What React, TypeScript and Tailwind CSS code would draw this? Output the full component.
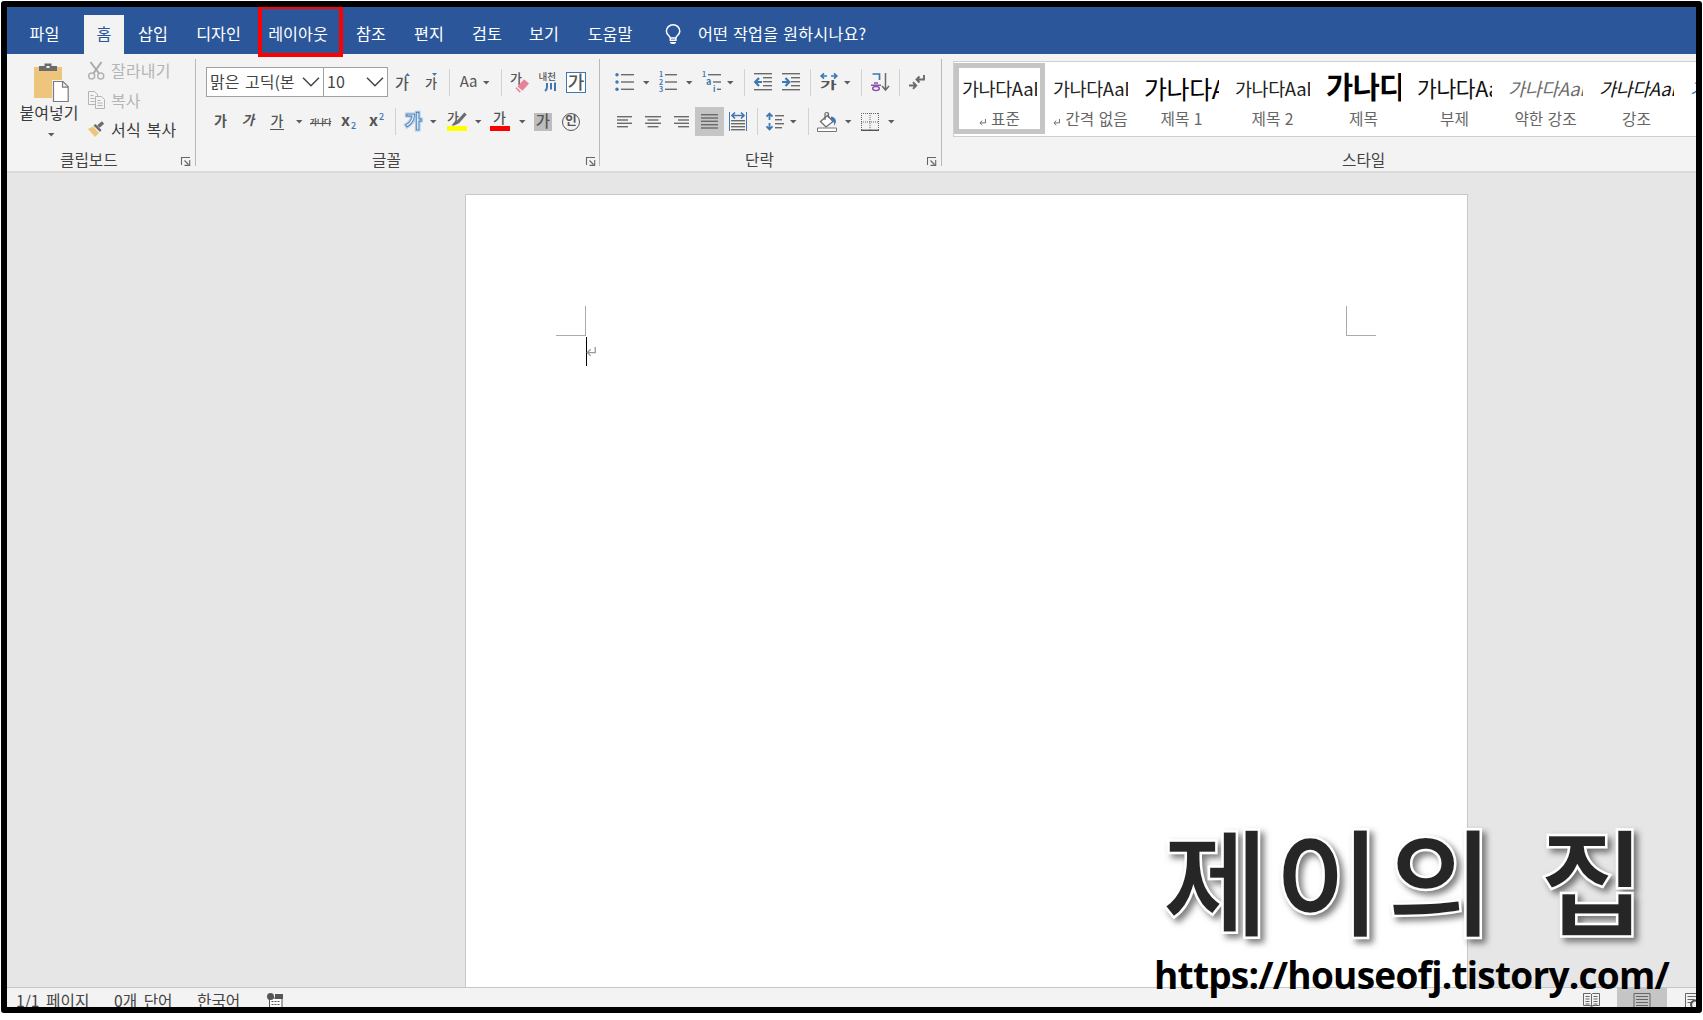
import type { ReactNode } from 'react'
import clsx from 'clsx'

interface Tab {
  label: string
  className: string
}

interface StyleItem {
  name: string
  preview: string
  previewClass: string
  paragraph?: boolean
  selected?: boolean
}

const GRAY = '#6a6a6a'
const BLUE = '#3e78b3'

const tabs: Tab[] = [
  { label: '삽입', className: 'ml-[14px] w-[30px]' },
  { label: '디자인', className: 'ml-[28px] w-[45px]' },
  { label: '레이아웃', className: 'ml-[27px] w-[60px]' },
  { label: '참조', className: 'ml-[28px] w-[30px]' },
  { label: '편지', className: 'ml-[28px] w-[30px]' },
  { label: '검토', className: 'ml-[28px] w-[30px]' },
  { label: '보기', className: 'ml-[27px] w-[30px]' },
  { label: '도움말', className: 'ml-[28px] w-[46px]' },
]

const styleItems: StyleItem[] = [
  { name: '표준', preview: '가나다AaBb', previewClass: 'text-[18.5px] text-[#222]', paragraph: true, selected: true },
  { name: '간격 없음', preview: '가나다AaBb', previewClass: 'text-[18.5px] text-[#222]', paragraph: true },
  { name: '제목 1', preview: '가나다AaBb', previewClass: 'text-[25px] text-black' },
  { name: '제목 2', preview: '가나다AaBb', previewClass: 'text-[18.5px] text-[#222]' },
  { name: '제목', preview: '가나다', previewClass: 'pb-[4px] text-[29.5px] font-bold text-black' },
  { name: '부제', preview: '가나다AaBb', previewClass: 'text-[21.5px] text-[#111]' },
  { name: '약한 강조', preview: '가나다AaBb', previewClass: 'text-[18.5px] italic text-[#6c6c6c]' },
  { name: '강조', preview: '가나다AaBb', previewClass: 'text-[18.5px] italic text-[#111]' },
  { name: '강한 강조', preview: '가나다AaBb', previewClass: 'text-[18.5px] italic text-[#4472c4]' },
]

function Icon({ w, h, className, children }: { w: number; h: number; className?: string; children: ReactNode }) {
  return (
    <svg width={w} height={h} viewBox={`0 0 ${w} ${h}`} fill="none" className={clsx('block shrink-0 overflow-visible', className)}>
      {children}
    </svg>
  )
}

function Caret({ className }: { className?: string }) {
  return (
    <Icon w={6} h={3} className={className}>
      <path d="M0 0h6.500L3.250 3.600z" fill="#5c5c5c" />
    </Icon>
  )
}

function Sep({ className }: { className?: string }) {
  return <div className={clsx('h-[27px] w-px shrink-0 bg-[#d2d2d2]', className)} />
}

function Glyph({ className, children }: { className?: string; children: ReactNode }) {
  return (
    <span className={clsx('flex shrink-0 items-center justify-center leading-none whitespace-nowrap text-[#555]', className)}>
      {children}
    </span>
  )
}

// Horizontal strokes given as [x1, x2, y]
function Lines({ rows, color = GRAY }: { rows: number[][]; color?: string }) {
  return (
    <>
      {rows.map(([x1, x2, y]) => (
        <rect key={`${x1}-${y}`} x={x1} y={y} width={x2 - x1} height={1.4} fill={color} />
      ))}
    </>
  )
}

function Launcher() {
  return (
    <Icon w={10} h={9}>
      <path d="M.5 8V.5H9M3.500 3.500l4 4M8.700 3v5.400H3.500" stroke="#666" strokeWidth="1.100" />
    </Icon>
  )
}

function Group({
  label,
  className,
  labelClass,
  launcherClass,
  children,
}: {
  label: string
  className: string
  labelClass: string
  launcherClass?: string
  children: ReactNode
}) {
  return (
    <section className={clsx('flex h-full shrink-0', className)}>
      <div className="flex min-w-0 flex-1 flex-col">
        <div className="h-[96px]">{children}</div>
        <div className="flex h-[21px] items-center">
          <span className={clsx('shrink-0 pb-[2px] text-[15.700px] leading-none whitespace-nowrap text-[#444]', labelClass)}>{label}</span>
          {launcherClass && (
            <span className={clsx('mt-[2px]', launcherClass)}>
              <Launcher />
            </span>
          )}
        </div>
      </div>
      {launcherClass && <div className="mt-[5px] h-[107px] w-px bg-[#b9b9b9]" />}
    </section>
  )
}

function TabBar() {
  return (
    <nav className="flex h-[47px] shrink-0 items-end bg-[#2b579a] text-[16.2px] text-white">
      <span className="ml-[22px] flex h-[39px] w-[31px] items-center justify-center pb-[2px] whitespace-nowrap">파일</span>
      <span className="ml-[24px] flex h-[39px] w-[40px] items-center justify-center bg-[#f3f3f3] pb-[2px] text-[#2b579a]">홈</span>
      {tabs.map(tab => (
        <span
          key={tab.label}
          className={clsx('relative flex h-[39px] shrink-0 items-center justify-center pb-[2px] whitespace-nowrap', tab.className)}
        >
          {tab.label}
          {tab.label === '레이아웃' && (
            <span className="absolute -top-[10px] -left-[10px] h-[52px] w-[85px] border-4 border-[#fe0000]" />
          )}
        </span>
      ))}
      <span className="ml-[32px] flex h-[39px] items-center">
        <Icon w={17} h={21}>
          <path
            d="M5.300 16.300v-2.600C4.500 11.500 1.400 10.500 1.400 7.200a6.700 6.500 0 0 1 13.400 0c0 3.300-3 4.300-3.900 6.500v2.600zM5.500 14h5.200"
            stroke="#fff"
            strokeWidth="1.500"
          />
          <path d="M5 18h6v1.200H9.800V20H6.300v-.8H5z" fill="#fff" />
        </Icon>
      </span>
      <span className="ml-[16px] flex h-[39px] items-center pb-[2px] tracking-[0.2px] whitespace-nowrap [word-spacing:1px]">
        어떤 작업을 원하시나요?
      </span>
    </nav>
  )
}

function ClipboardGroup() {
  return (
    <Group label="클립보드" className="w-[189px]" labelClass="ml-[53px] w-[60px]" launcherClass="ml-[61px]">
      <div className="flex text-[16px] leading-none text-[#3b3b3b]">
        <div className="flex w-[74px] flex-col items-center pl-[10px]">
          <Icon w={35} h={39} className="mt-[9px] ml-[4px]">
            <path d="M0 4h28v31H0z" fill="#edc57d" />
            <path d="M5 8V3h5.500V.5h7V3H23v5z" fill="#6b6b6b" />
            <path d="M12.500 3h3v2h-3z" fill="#f3f3f3" />
            <path d="M18 17h13l5 6v17H18z" fill="#f3f3f3" />
            <path d="M19.500 18.500h9.500l5.200 5.200v14.800H19.500zM28.500 18.700v5.500h5.500" fill="#fff" stroke="#7b7b7b" strokeWidth="1.200" />
          </Icon>
          <span className="mt-[2px] whitespace-nowrap">붙여넣기</span>
          <Caret className="mt-[13px] ml-[4px]" />
        </div>
        <div className="ml-[7px] flex flex-col pt-[4px]">
          <div className="flex h-[29px] items-center gap-[6px] text-[#b4b4b4]">
            <Icon w={17} h={18} className="-mt-[4px]">
              <path d="M2.500 0L11.500 12M13.500 0L5 12" stroke="#a9a9a9" strokeWidth="2" />
              <circle cx="3.700" cy="14" r="3" stroke="#b4b4b4" strokeWidth="1.500" />
              <circle cx="12.700" cy="14" r="3" stroke="#b4b4b4" strokeWidth="1.500" />
            </Icon>
            <span className="pb-[5px] tracking-[0.2px]">잘라내기</span>
          </div>
          <div className="flex h-[29px] items-center gap-[6px] text-[#b4b4b4]">
            <Icon w={17} h={19} className="-mt-[2px]">
              <path d="M.5.5h6l3 3v10h-9zM2.500 4.500h3M2.500 7.500h4M2.500 10.500h4" stroke="#b4b4b4" />
              <path d="M7.500 5.500h6l3 3v9h-9z" fill="#f3f3f3" stroke="#b4b4b4" />
              <path d="M9.500 9.500h3M9.500 12h5M9.500 14.500h5" stroke="#b4b4b4" />
            </Icon>
            <span className="pb-[4px]">복사</span>
          </div>
          <div className="flex h-[29px] items-center gap-[6px] whitespace-nowrap">
            <Icon w={17} h={16} className="-mt-[3px]">
              <path d="M0 8l5-2.500 6 6.500-4 4z" fill="#edc57d" />
              <path d="M5.500 4.500l2-1.500 6 6-1.500 2z" fill="#6b6b6b" />
              <path d="M10.500 5.500L15 1.500" stroke="#6b6b6b" strokeWidth="3.500" />
            </Icon>
            <span className="pb-[4px] tracking-[0.2px] [word-spacing:2px]">서식 복사</span>
          </div>
        </div>
      </div>
    </Group>
  )
}

function Combo({ value, className }: { value: string; className: string }) {
  return (
    <div className={clsx('flex h-[30px] shrink-0 items-center justify-between border border-[#a0a0a0] bg-white pr-[4px] pl-[3px]', className)}>
      <span className="pb-[3px] text-[16px] leading-none whitespace-nowrap text-[#444] [word-spacing:2px]">{value}</span>
      <Icon w={16} h={10}>
        <path d="M0 .7l8 8 8-8" stroke="#444" strokeWidth="1.500" />
      </Icon>
    </div>
  )
}

function FontGroup() {
  return (
    <Group label="글꼴" className="w-[404px]" labelClass="ml-[176px] w-[30px]" launcherClass="ml-[184px]">
      <div className="box-content flex h-[30px] items-center pt-[13px]">
        <Combo value="맑은 고딕(본" className="ml-[10px] w-[118px]" />
        <Combo value="10" className="-ml-px w-[65px]" />
        <Glyph className="relative ml-[7px] w-[14px] text-[15px] font-medium">
          가
          <Icon w={5} h={3} className="absolute top-[-2px] right-[-1px]">
            <path d="M0 3h5L2.500 0z" fill={BLUE} />
          </Icon>
        </Glyph>
        <Glyph className="relative ml-[16px] w-[12px] text-[13px] font-medium">
          가
          <Icon w={5} h={3} className="absolute top-[-3px] right-0">
            <path d="M0 0h5L2.500 3z" fill={BLUE} />
          </Icon>
        </Glyph>
        <Sep className="ml-[12px]" />
        <Glyph className="ml-[9px] w-[19px] pb-[3px] text-[15px] tracking-[-0.3px]">Aa</Glyph>
        <Caret className="ml-[5px]" />
        <Sep className="ml-[12px]" />
        <Icon w={18} h={20} className="ml-[9px]">
          <text x="-1" y="11" fontSize="13" fontWeight="500" fill="#555">가</text>
          <path d="M6.500 14.500l6.500-7.200 5 4.200-6.500 7.200z" fill="#e8829a" />
          <path d="M4.500 16.200l1-1 4.300 4.300-1 1.200z" fill="#e8829a" />
        </Icon>
        <Icon w={18} h={20} className="ml-[10px]">
          <text x="-.5" y="7.500" fontSize="9.500" fontWeight="500" fill="#555">내천</text>
          <path d="M8 11v4q0 2.500-2 4M12 11v6.500M16 10.500v8.500" stroke={BLUE} strokeWidth="2" />
        </Icon>
        <Glyph className="ml-[9px] h-[21px] w-[20px] border border-[#3e78b3] bg-white pb-[3px] text-[18px] font-medium">가</Glyph>
      </div>
      <div className="mt-[10px] flex h-[29px] items-center">
        <Glyph className="ml-[18px] w-[13px] pb-[3px] text-[14px] font-bold">가</Glyph>
        <Glyph className="ml-[15px] w-[12px] pb-[3px] text-[13.500px] font-bold italic">가</Glyph>
        <Glyph className="ml-[16px] h-[17px] w-[14px] border-b border-[#555] pb-[2px] text-[14px] font-medium">가</Glyph>
        <Caret className="ml-[12px]" />
        <Glyph className="relative ml-[8px] w-[21px] text-[8px] font-bold tracking-[-0.2px]">
          가나다
          <span className="absolute inset-x-0 top-[5px] h-px bg-[#555]" />
        </Glyph>
        <Icon w={16} h={18} className="ml-[10px]">
          <text x="0" y="13" fontSize="16" fontWeight="700" fill="#555">x</text>
          <text x="10" y="16" fontSize="9" fontWeight="500" fill={BLUE}>2</text>
        </Icon>
        <Icon w={16} h={18} className="ml-[12px]">
          <text x="0" y="13" fontSize="16" fontWeight="700" fill="#555">x</text>
          <text x="10" y="6.500" fontSize="9" fontWeight="500" fill={BLUE}>2</text>
        </Icon>
        <Sep className="ml-[10px]" />
        <Icon w={18} h={20} className="ml-[9px]">
          <text x="0" y="15.500" fontSize="18" fontWeight="700" fill="#f7fbff" stroke="#b5cfea" strokeWidth="3.200" paintOrder="stroke">가</text>
          <text x="0" y="15.500" fontSize="18" fontWeight="700" fill="#f7fbff" stroke={BLUE} strokeWidth=".9">가</text>
        </Icon>
        <Caret className="ml-[7px]" />
        <Icon w={20} h={21} className="ml-[11px]">
          <text x="0" y="11" fontSize="13" fontWeight="500" fill="#555">가</text>
          <path d="M18.500 2.500L11 11" stroke="#6b6b6b" strokeWidth="3.200" />
          <path d="M9 9l3.500 3-5.500 2.500H4.500z" fill="#6b6b6b" />
          <rect y="15" width="20" height="5" fill="#ff0" />
        </Icon>
        <Caret className="ml-[8px]" />
        <Icon w={20} h={21} className="ml-[9px]">
          <text x="3" y="12" fontSize="14" fontWeight="500" fill="#555">가</text>
          <rect y="15" width="20" height="5" fill="#f00" />
        </Icon>
        <Caret className="ml-[9px]" />
        <Glyph className="ml-[9px] h-[18px] w-[18px] bg-[#bdbdbd] pb-[2px] text-[15.500px] font-medium">가</Glyph>
        <Glyph className="ml-[10px] h-[18px] w-[18px] rounded-full border border-[#555] pb-[2px] text-[12.500px] font-bold">인</Glyph>
      </div>
    </Group>
  )
}

function ParagraphGroup() {
  const indentLines = [[0, 18, 0], [9, 18, 4], [9, 18, 8], [9, 18, 12], [0, 18, 16]]

  return (
    <Group label="단락" className="w-[342px]" labelClass="ml-[145px] w-[30px]" launcherClass="ml-[152px]">
      <div className="box-content flex h-[30px] items-center pt-[13px]">
        <Icon w={19} h={18} className="ml-[15px]">
          {[1.7, 9, 16.3].map(y => (
            <circle key={y} cx="2" cy={y} r="1.700" fill={BLUE} />
          ))}
          <Lines rows={[[6, 19, 1], [6, 19, 8.3], [6, 19, 15.6]]} />
        </Icon>
        <Caret className="ml-[9px]" />
        <Icon w={18} h={18} className="ml-[10px]">
          <text x="0" y="4" fontSize="7" fontWeight="700" fill={BLUE}>1</text>
          <text x="0" y="11.500" fontSize="7" fontWeight="700" fill={BLUE}>2</text>
          <text x="0" y="19" fontSize="7" fontWeight="700" fill={BLUE}>3</text>
          <Lines rows={[[6, 18, 1], [6, 18, 8.3], [6, 18, 15.6]]} />
        </Icon>
        <Caret className="ml-[9px]" />
        <Icon w={19} h={18} className="ml-[10px]">
          <text x="0" y="4" fontSize="7" fontWeight="700" fill={BLUE}>1</text>
          <text x="4" y="11.500" fontSize="9" fontWeight="700" fill={BLUE}>a</text>
          <text x="11" y="19" fontSize="8" fontWeight="700" fill={BLUE}>i</text>
          <Lines rows={[[6, 19, 1], [11, 19, 8.3], [15, 19, 15.6]]} />
        </Icon>
        <Caret className="ml-[6px]" />
        <Sep className="ml-[11px]" />
        <Icon w={18} h={18} className="ml-[9px]">
          <Lines rows={indentLines} />
          <path d="M8 9H2M5 5L1.200 9 5 13" stroke={BLUE} strokeWidth="2.200" />
        </Icon>
        <Icon w={19} h={18} className="ml-[10px]">
          <Lines rows={indentLines} />
          <path d="M0 9h6M3.500 5l3.800 4-3.800 4" stroke={BLUE} strokeWidth="2.200" />
        </Icon>
        <Sep className="ml-[9px]" />
        <Icon w={18} h={18} className="ml-[9px]">
          <path d="M1 3h6M4 .3L1.200 3 4 5.700M11 3h6M14 .3l2.800 2.700L14 5.700" stroke={BLUE} strokeWidth="1.700" />
          <text x="0" y="17" fontSize="14" fontWeight="700" fill="#555" transform="matrix(1.300 0 0 .75 0 3.500)">가</text>
        </Icon>
        <Caret className="ml-[6px]" />
        <Sep className="ml-[11px]" />
        <Icon w={19} h={18} className="ml-[9px]">
          <path d="M1.500 1h7v6" stroke={BLUE} strokeWidth="1.700" />
          <path d="M3 10h4M0 12.300h10" stroke="#8a52ae" strokeWidth="1.500" />
          <ellipse cx="5" cy="15.600" rx="3.300" ry="2" stroke="#8a52ae" strokeWidth="1.500" />
          <path d="M14.500 0v17M11 13l3.500 4 3.500-4" stroke={GRAY} strokeWidth="1.500" />
        </Icon>
        <Sep className="ml-[9px]" />
        <Icon w={18} h={18} className="ml-[8px]">
          <path d="M16 2v4.500H9M11.500 3.500L8.500 6.500l3 3" stroke={GRAY} strokeWidth="1.900" />
          <path d="M1 12.500h7M5 9.200l3.200 3.300L5 15.800" stroke={GRAY} strokeWidth="1.900" />
        </Icon>
      </div>
      <div className="mt-[10px] flex h-[29px] items-center">
        <Icon w={15} h={12} className="ml-[17px]">
          <Lines rows={[[0, 15, 0], [0, 11, 3.3], [0, 15, 6.6], [0, 11, 10]]} />
        </Icon>
        <Icon w={16} h={12} className="ml-[13px]">
          <Lines rows={[[0, 16, 0], [2.5, 13.5, 3.3], [0, 16, 6.6], [2.5, 13.5, 10]]} />
        </Icon>
        <Icon w={15} h={12} className="ml-[13px]">
          <Lines rows={[[0, 15, 0], [4, 15, 3.3], [0, 15, 6.6], [4, 15, 10]]} />
        </Icon>
        <span className="ml-[6px] flex h-[29px] w-[29px] items-center justify-center bg-[#c5c5c5]">
          <Icon w={17} h={15} className="-mt-px">
            <Lines rows={[[0, 17, 0], [0, 17, 3.3], [0, 17, 6.6], [0, 17, 10], [0, 17, 13.3]]} />
          </Icon>
        </span>
        <Icon w={18} h={19} className="ml-[5px]">
          <path d="M.5 0v19M17.500 0v19" stroke={BLUE} />
          <path d="M4 3.500h10M6 .5L3 3.500l3 3M12 .5l3 3-3 3" stroke={BLUE} strokeWidth="1.700" />
          <Lines rows={[[2, 16, 8], [2, 16, 11], [2, 16, 14], [2, 16, 17]]} />
        </Icon>
        <Sep className="ml-[10px]" />
        <Icon w={18} h={19} className="ml-[8px]">
          <path d="M3.500 2v6M.5 4.700L3.500 1.500l3 3.200M3.500 11v6M.5 14.300l3 3.200 3-3.200" stroke={BLUE} strokeWidth="1.800" />
          <Lines rows={[[9, 18, 3], [9, 16, 7], [9, 18, 11], [9, 16, 15]]} />
        </Icon>
        <Caret className="ml-[6px]" />
        <Sep className="ml-[12px]" />
        <Icon w={20} h={20} className="ml-[8px]">
          <path d="M3.500 9.500l7-6 5.500 6-7 5.500z" fill="#fff" stroke={GRAY} strokeWidth="1.300" />
          <path d="M8 8V2.500Q8 .5 9.800.5t1.700 2V6" stroke={GRAY} strokeWidth="1.200" />
          <path d="M14 4.500q4.500.5 5 5l-1.500 4.500q-.5-5.500-3.500-6z" fill={BLUE} />
          <path d="M.5 16h19v3.500H.5z" fill="#fff" stroke="#777" />
        </Icon>
        <Caret className="ml-[8px]" />
        <Icon w={18} h={18} className="ml-[10px]">
          <path d="M0 .5h18M0 9h18M.5 0v17M9 0v17M17.500 0v17" stroke="#666" strokeDasharray="1 1" />
          <path d="M0 17.300h18" stroke="#555" strokeWidth="1.400" />
        </Icon>
        <Caret className="ml-[9px]" />
      </div>
    </Group>
  )
}

function ParagraphMark({ size, color, className }: { size: number; color: string; className?: string }) {
  return (
    <svg width={size} height={size} viewBox="0 0 9 9" fill="none" className={clsx('block shrink-0', className)}>
      <path d="M8.300 0v5H1.500M4.200 2L1.200 5l3 3" stroke={color} strokeWidth="1.200" />
    </svg>
  )
}

function StylesGroup() {
  return (
    <Group label="스타일" className="min-w-0 flex-1" labelClass="ml-[400px]">
      <div className="flex h-full pt-[7px] pb-[13px] pl-[11px]">
        <div className="flex min-w-0 flex-1 overflow-hidden border-y border-l border-[#cfcfcf] bg-white pt-px">
          {styleItems.map(item => (
            <div
              key={item.name}
              className={clsx(
                'flex h-[71px] w-[91px] shrink-0 flex-col border-[5px] px-[3px]',
                item.selected ? 'border-[#c5c5c5]' : 'border-transparent',
              )}
            >
              <div
                className={clsx(
                  'flex h-[40px] w-[75px] items-center overflow-hidden leading-none tracking-[-0.4px] whitespace-nowrap',
                  item.previewClass,
                )}
              >
                {item.preview}
              </div>
              <div className="mt-[2px] flex h-[18px] items-center justify-center gap-[5px] text-[15.700px] leading-none whitespace-nowrap text-[#666] [word-spacing:1px]">
                {item.paragraph && <ParagraphMark size={7} color="#666" className="mt-[6px]" />}
                {item.name}
              </div>
            </div>
          ))}
        </div>
      </div>
    </Group>
  )
}

function Ribbon() {
  return (
    <div className="flex h-[119px] shrink-0 overflow-hidden border-b-2 border-[#dadada] bg-[#f3f3f3]">
      <ClipboardGroup />
      <FontGroup />
      <ParagraphGroup />
      <StylesGroup />
    </div>
  )
}

function DocumentCanvas() {
  return (
    <main className="flex h-[814px] shrink-0 bg-[#e6e6e6] pt-[21px] pl-[458px]">
      <div className="w-[1003px] border-x border-t border-[#c8c8c8] bg-white pt-[111px]">
        <div className="flex justify-between pr-[91px] pl-[90px]">
          <div className="h-[30px] w-[30px] border-r border-b border-[#ababab]" />
          <div className="h-[30px] w-[30px] border-b border-l border-[#ababab]" />
        </div>
        <div className="mt-px ml-[120px] flex items-center">
          <div className="h-[29px] w-px bg-black" />
          <ParagraphMark size={10} color="#9a9a9a" className="-ml-px" />
        </div>
      </div>
    </main>
  )
}

function StatusBar() {
  return (
    <footer className="flex h-[20px] shrink-0 overflow-hidden border-t border-[#c6c6c6] bg-[#f3f3f3] text-[15.700px] leading-none text-[#444]">
      <div className="flex h-[26px] items-center whitespace-nowrap [word-spacing:3px]">
        <span className="ml-[9px] w-[72px]">1/1 페이지</span>
        <span className="ml-[26px] w-[58px]">0개 단어</span>
        <span className="ml-[25px] w-[45px]">한국어</span>
        <Icon w={16} h={18} className="mt-[2px] ml-[25px]">
          <path d="M4.500 5h10.500v12H2.500V6" fill="#fff" stroke="#555" />
          <path d="M8 1h8v5H8z" fill="#555" />
          <circle cx="3.500" cy="3.500" r="3.500" fill="#555" />
          <path d="M4.500 8.500h9M4.500 11.500h9M4.500 14.500h9" stroke="#555" strokeDasharray="2 1" />
        </Icon>
      </div>
      <div className="ml-auto flex h-[28px]">
        <Icon w={17} h={18} className="mt-[4px] mr-[17px]">
          <path d="M.5 1.500h7l1 1 1-1h7v12h-7l-1 2-1-2h-7zM8.500 2v12" stroke="#666" />
          <path d="M2.500 4.500h4M2.500 7h4M2.500 9.500h4M2.500 12h4M10.500 4.500h4M10.500 7h4M10.500 9.500h4M10.500 12h4" stroke="#666" />
        </Icon>
        <span className="flex w-[50px] justify-center bg-[#c5c5c5] pt-[5px] pr-px">
          <Icon w={18} h={20}>
            <path d="M1 .5h16v20H1z" stroke="#666" />
            <path d="M3 3.500h12M3 6.500h12M3 9.500h12M3 12.500h12" stroke="#666" />
          </Icon>
        </span>
        <Icon w={11} h={18} className="mt-[5px] ml-[18px]">
          <path d="M12 .5H.5v14h6M2.500 3.500h9M2.500 6.500h7M2.500 9.500h4" stroke="#666" />
          <path d="M7 14a4 4 0 0 1 5-6" stroke="#555" strokeWidth="2" />
        </Icon>
      </div>
    </footer>
  )
}

function Watermark() {
  return (
    <>
      <div className="absolute top-[796px] left-[1162px] text-[116px] leading-[160px] font-bold tracking-[5.500px] [word-spacing:8px] whitespace-pre text-[#262626] [-webkit-text-stroke:2.500px_white] [filter:drop-shadow(4px_4px_3px_rgba(0,0,0,0.5))]">
        제이의 집
      </div>
      <div className="absolute top-[948px] left-[1154px] font-['Open_Sans','Noto_Sans',sans-serif] text-[37px] leading-[54px] font-bold tracking-[-0.750px] whitespace-nowrap text-black">
        https://houseofj.tistory.com/
      </div>
    </>
  )
}

export default function App() {
  return (
    <div className="relative h-[1020px] w-[1703px] overflow-hidden bg-white p-px font-['Noto_Sans_CJK_KR','Noto_Sans',sans-serif]">
      <div className="flex h-[1012px] w-[1701px] flex-col overflow-hidden rounded-[3px] border-[6px] border-black">
        <TabBar />
        <Ribbon />
        <DocumentCanvas />
        <StatusBar />
      </div>
      <Watermark />
    </div>
  )
}
